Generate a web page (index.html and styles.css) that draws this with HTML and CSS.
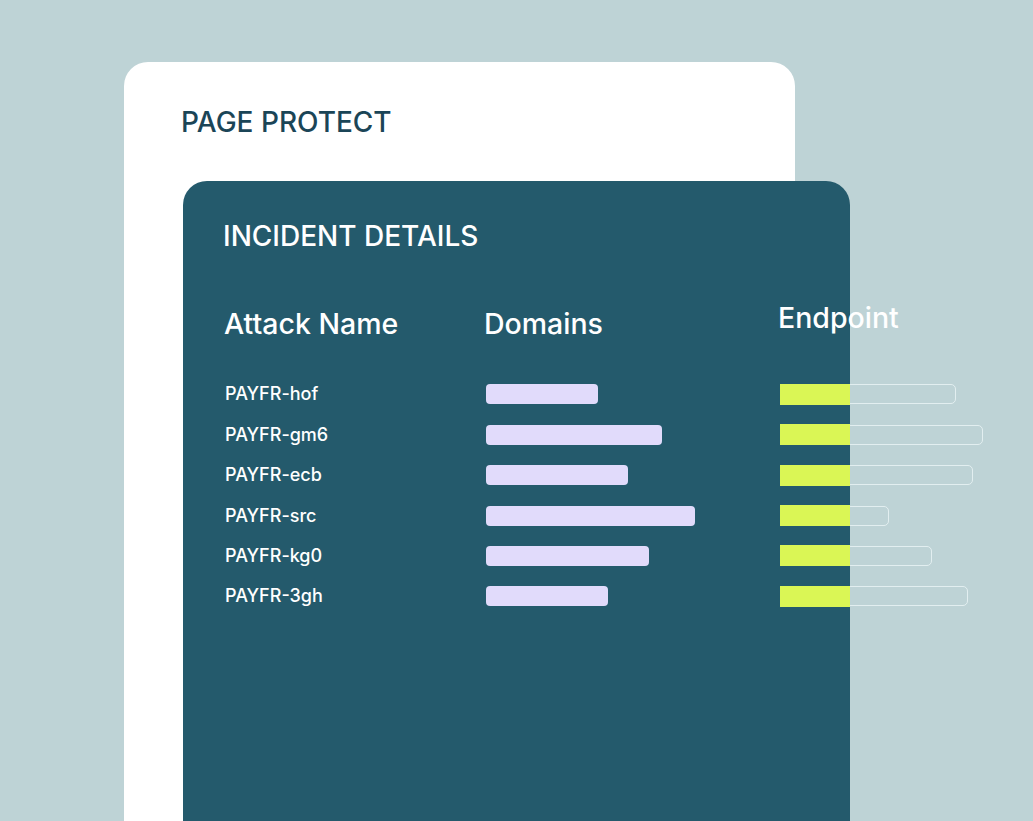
FILE: index.html
```html
<!DOCTYPE html>
<html lang="en">
<head>
<meta charset="utf-8">
<title>Page Protect</title>
<link rel="stylesheet" href="styles.css">
</head>
<body>
<main class="stage">
  <section class="page-card">
    <h1 class="page-title">PAGE PROTECT</h1>
    <section class="incident-card">
      <h2 class="incident-title">INCIDENT DETAILS</h2>
      <div class="table">
        <div class="th">Attack Name</div>
        <div class="th">Domains</div>
        <div class="th th-endpoint">Endpoint</div>

        <div class="name">PAYFR-hof</div>
        <div class="cell"><span class="domain-bar" style="width:112px"></span></div>
        <div class="cell"><span class="endpoint-bar" style="width:176px"><span class="endpoint-fill"></span></span></div>

        <div class="name">PAYFR-gm6</div>
        <div class="cell"><span class="domain-bar" style="width:176px"></span></div>
        <div class="cell"><span class="endpoint-bar" style="width:203px"><span class="endpoint-fill"></span></span></div>

        <div class="name">PAYFR-ecb</div>
        <div class="cell"><span class="domain-bar" style="width:142px"></span></div>
        <div class="cell"><span class="endpoint-bar" style="width:193px"><span class="endpoint-fill"></span></span></div>

        <div class="name">PAYFR-src</div>
        <div class="cell"><span class="domain-bar" style="width:209px"></span></div>
        <div class="cell"><span class="endpoint-bar" style="width:109px"><span class="endpoint-fill"></span></span></div>

        <div class="name">PAYFR-kg0</div>
        <div class="cell"><span class="domain-bar" style="width:163px"></span></div>
        <div class="cell"><span class="endpoint-bar" style="width:152px"><span class="endpoint-fill"></span></span></div>

        <div class="name">PAYFR-3gh</div>
        <div class="cell"><span class="domain-bar" style="width:122px"></span></div>
        <div class="cell"><span class="endpoint-bar" style="width:188px"><span class="endpoint-fill"></span></span></div>
      </div>
    </section>
  </section>
</main>
</body>
</html>
```
FILE: styles.css
```css
html, body {
  margin: 0;
  padding: 0;
  height: 100%;
  overflow: hidden;
}
body {
  background: #bed3d6;
  font-family: Inter, "Noto Sans", sans-serif;
}
.stage {
  padding: 62px 0 0 124px;
}
.page-card {
  width: 671px;
  min-height: 900px;
  background: #ffffff;
  border-radius: 24px 24px 0 0;
  padding: 44px 0 0 57px;
  box-sizing: border-box;
}
.page-title {
  margin: 0;
  font-size: 28px;
  line-height: 32px;
  font-weight: 500;
  color: #1b4557;
  letter-spacing: 0;
}
.incident-card {
  margin: 43px 0 0 2px;
  width: 667px;
  min-height: 800px;
  background: #245a6c;
  border-radius: 24px 24px 0 0;
  padding: 39px 0 0 40px;
  box-sizing: border-box;
  color: #ffffff;
}
.incident-title {
  margin: 0;
  font-size: 28px;
  line-height: 32px;
  font-weight: 500;
  letter-spacing: 0;
}
.table {
  margin-top: 56px;
  display: grid;
  grid-template-columns: 261px 295px auto;
  row-gap: 20.4px;
  align-items: center;
}
.th {
  font-size: 28.5px;
  line-height: 32px;
  font-weight: 500;
  margin-bottom: 24px;
}
.th:first-child {
  padding-left: 1px;
}
.th-endpoint {
  margin-top: -12px;
  margin-left: -1px;
}
.name {
  font-size: 18px;
  line-height: 20px;
  font-weight: 500;
  padding-left: 2px;
}
.cell {
  height: 20px;
  display: flex;
  align-items: center;
}
.domain-bar {
  display: block;
  height: 20px;
  margin-left: 2px;
  background: #e1dbfb;
  border-radius: 4px;
}
.endpoint-bar {
  display: block;
  position: relative;
  height: 20px;
  margin-left: 1px;
  box-sizing: border-box;
  border: 1.5px solid rgba(235, 245, 246, 0.8);
  border-radius: 5px;
}
.endpoint-fill {
  position: absolute;
  left: -1.5px;
  top: -1.5px;
  bottom: -1.5px;
  width: 70px;
  background: #daf655;
}
```
